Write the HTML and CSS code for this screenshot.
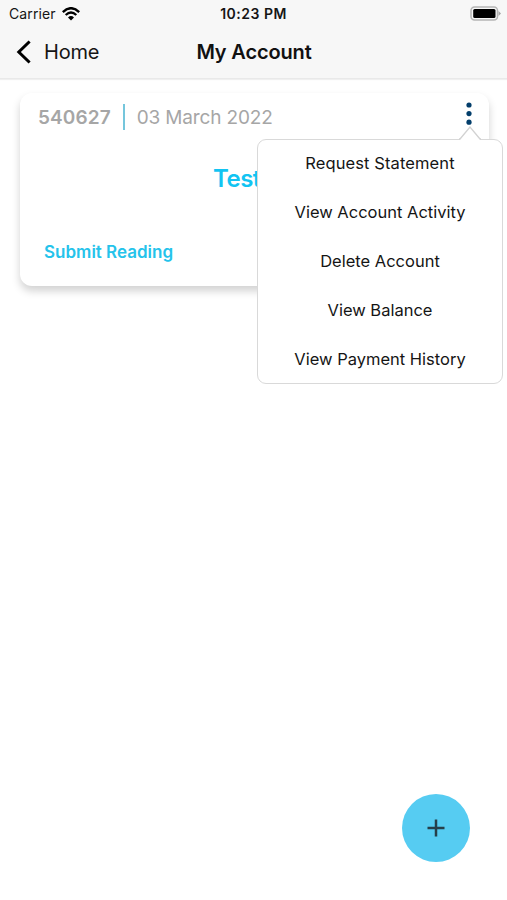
FILE: index.html
```html
<!DOCTYPE html>
<html lang="en">
<head>
    <meta charset="UTF-8">
    <meta name="viewport" content="width=device-width, initial-scale=1.0">
    <title>My Account</title>
    <link rel="stylesheet" href="styles.css">
</head>
<body>
    <header class="header">
        <div class="status">
            <div class="carrier">
                <span>Carrier</span>
                <svg class="wifi" width="18" height="14" viewBox="0 0 18 14">
                    <path d="M0.8 5.1 Q9 -2.6 17.2 5.1" fill="none" stroke="#000" stroke-width="2.5"/>
                    <path d="M3.7 8 Q9 3 14.3 8" fill="none" stroke="#000" stroke-width="2.3"/>
                    <path d="M6 10.5 Q9 7.7 12 10.5 L9 13.5 Z" fill="#000"/>
                </svg>
            </div>
            <span class="time">10:23 PM</span>
            <svg class="battery" width="31" height="16" viewBox="0 0 31 16">
                <rect x="1" y="1" width="26.5" height="13" rx="3.5" fill="#f7f7f7" stroke="#b5b5b5" stroke-width="1.5"/>
                <rect x="3.2" y="3" width="22.3" height="9" rx="1.5" fill="#000"/>
                <path d="M28.5 5 L31 7.5 L28.5 10 Z" fill="#a5a5a5"/>
            </svg>
        </div>
        <div class="nav">
            <a class="back" href="#">
                <svg width="16" height="26" viewBox="0 0 16 26">
                    <path d="M13.6 2.5 L2.8 13 L13.6 23.5" fill="none" stroke="#000" stroke-width="3"/>
                </svg>
                <span>Home</span>
            </a>
            <h1 class="title">My Account</h1>
        </div>
    </header>

    <main class="content">
        <div class="card">
            <div class="card-top">
                <span class="number">540627</span>
                <span class="line"></span>
                <span class="date">03 March 2022</span>
                <div class="more">
                    <svg width="6" height="24" viewBox="0 0 6 24">
                        <circle cx="3" cy="3" r="2.6" fill="#033e6b"/>
                        <circle cx="3" cy="11.6" r="2.6" fill="#033e6b"/>
                        <circle cx="3" cy="20.2" r="2.6" fill="#033e6b"/>
                    </svg>
                    <div class="menu">
                        <svg class="arrow" width="22" height="14" viewBox="0 0 22 14">
                            <path d="M1 13 L11 1 L21 13 V14 H1 Z" fill="#fff"/>
                            <path d="M0 13 H1 L11 1 L21 13 H22" fill="none" stroke="#d2d2d2" stroke-width="1.3"/>
                        </svg>
                        <a href="#" class="menu-item request">Request Statement</a>
                        <a href="#" class="menu-item">View Account Activity</a>
                        <a href="#" class="menu-item">Delete Account</a>
                        <a href="#" class="menu-item">View Balance</a>
                        <a href="#" class="menu-item">View Payment History</a>
                    </div>
                </div>
            </div>
            <h2 class="name">Test</h2>
            <a href="#" class="submit">Submit Reading</a>
        </div>
    </main>

    <button class="add" aria-label="Add account">
        <svg width="18" height="18" viewBox="0 0 18 18">
            <path d="M9 0.5 V17.5 M0.5 9 H17.5" fill="none" stroke="#263f4a" stroke-width="2.5"/>
        </svg>
    </button>
</body>
</html>
```
FILE: styles.css
```css
body{
    margin: 0;
    min-height: 900px;
    background-color: #fff;
    font-family: Inter, "Liberation Sans", sans-serif;
    color: #151515;
    overflow: hidden;
}
a{
    text-decoration: none;
    color: inherit;
}
.header{
    height: 79px;
    box-sizing: border-box;
    background-color: #f7f7f7;
    border-bottom: 1px solid #e9e9e9;
    box-shadow: 0 1px 1px #f0f0f0;
}
.status{
    display: grid;
    grid-template-columns: 1fr auto 1fr;
    align-items: center;
    height: 27px;
    padding: 0 6px 0 9px;
}
.carrier{
    display: flex;
    align-items: center;
    gap: 6px;
    font-size: 14px;
    line-height: 27px;
    letter-spacing: 0.1px;
}
.time{
    margin-right: 3px;
    font-size: 14px;
    font-weight: 600;
    letter-spacing: 0.5px;
}
.battery{
    justify-self: end;
}
.nav{
    display: grid;
    grid-template-columns: 1fr auto 1fr;
    align-items: center;
    height: 50px;
    padding: 0 15px 0 16px;
}
.back{
    display: flex;
    align-items: center;
    gap: 12px;
    font-size: 20px;
    letter-spacing: -0.2px;
}
.title{
    margin: 0;
    font-size: 20px;
    font-weight: 600;
    letter-spacing: -0.15px;
    color: #111;
}
.content{
    padding: 14px 18px 0 20px;
}
.card{
    height: 193px;
    box-sizing: border-box;
    padding: 9px 17px 0 18px;
    border-radius: 12px;
    background-color: #fff;
    box-shadow: 0 5px 9px rgba(0, 0, 0, 0.18);
}
.card-top{
    display: flex;
    align-items: center;
    height: 30px;
    color: #a6a6a6;
    font-size: 19px;
}
.number{
    font-weight: 600;
    letter-spacing: 0.1px;
}
.line{
    width: 2px;
    height: 26px;
    margin: 0 12px;
    background-color: #75c6dc;
}
.date{
    letter-spacing: -0.15px;
}
.more{
    position: relative;
    display: flex;
    margin: 0 0 6px auto;
}
.menu{
    position: absolute;
    top: 37px;
    right: -31px;
    display: flex;
    flex-direction: column;
    width: 246px;
    height: 245px;
    box-sizing: border-box;
    border: 1.5px solid #d9d9d9;
    border-radius: 9px;
    background-color: #fff;
    color: #151515;
}
.arrow{
    position: absolute;
    top: -14px;
    right: 21px;
}
.menu-item{
    flex-shrink: 0;
    height: 49px;
    line-height: 47px;
    font-size: 16.5px;
    text-align: center;
    white-space: nowrap;
}
.request{
    letter-spacing: 0.1px;
}
.name{
    margin: 30px 0 0;
    padding-left: 175px;
    font-size: 24px;
    font-weight: 600;
    line-height: 34px;
    letter-spacing: -0.5px;
    color: #12c4f2;
}
.submit{
    display: block;
    margin: 44px 0 0 6px;
    font-size: 17px;
    font-weight: 600;
    line-height: 24px;
    color: #25c3eb;
}
.add{
    position: fixed;
    left: 402px;
    top: 794px;
    display: flex;
    align-items: center;
    justify-content: center;
    width: 68px;
    height: 68px;
    padding: 0;
    border: none;
    border-radius: 50%;
    background-color: #56ccf2;
}
```
